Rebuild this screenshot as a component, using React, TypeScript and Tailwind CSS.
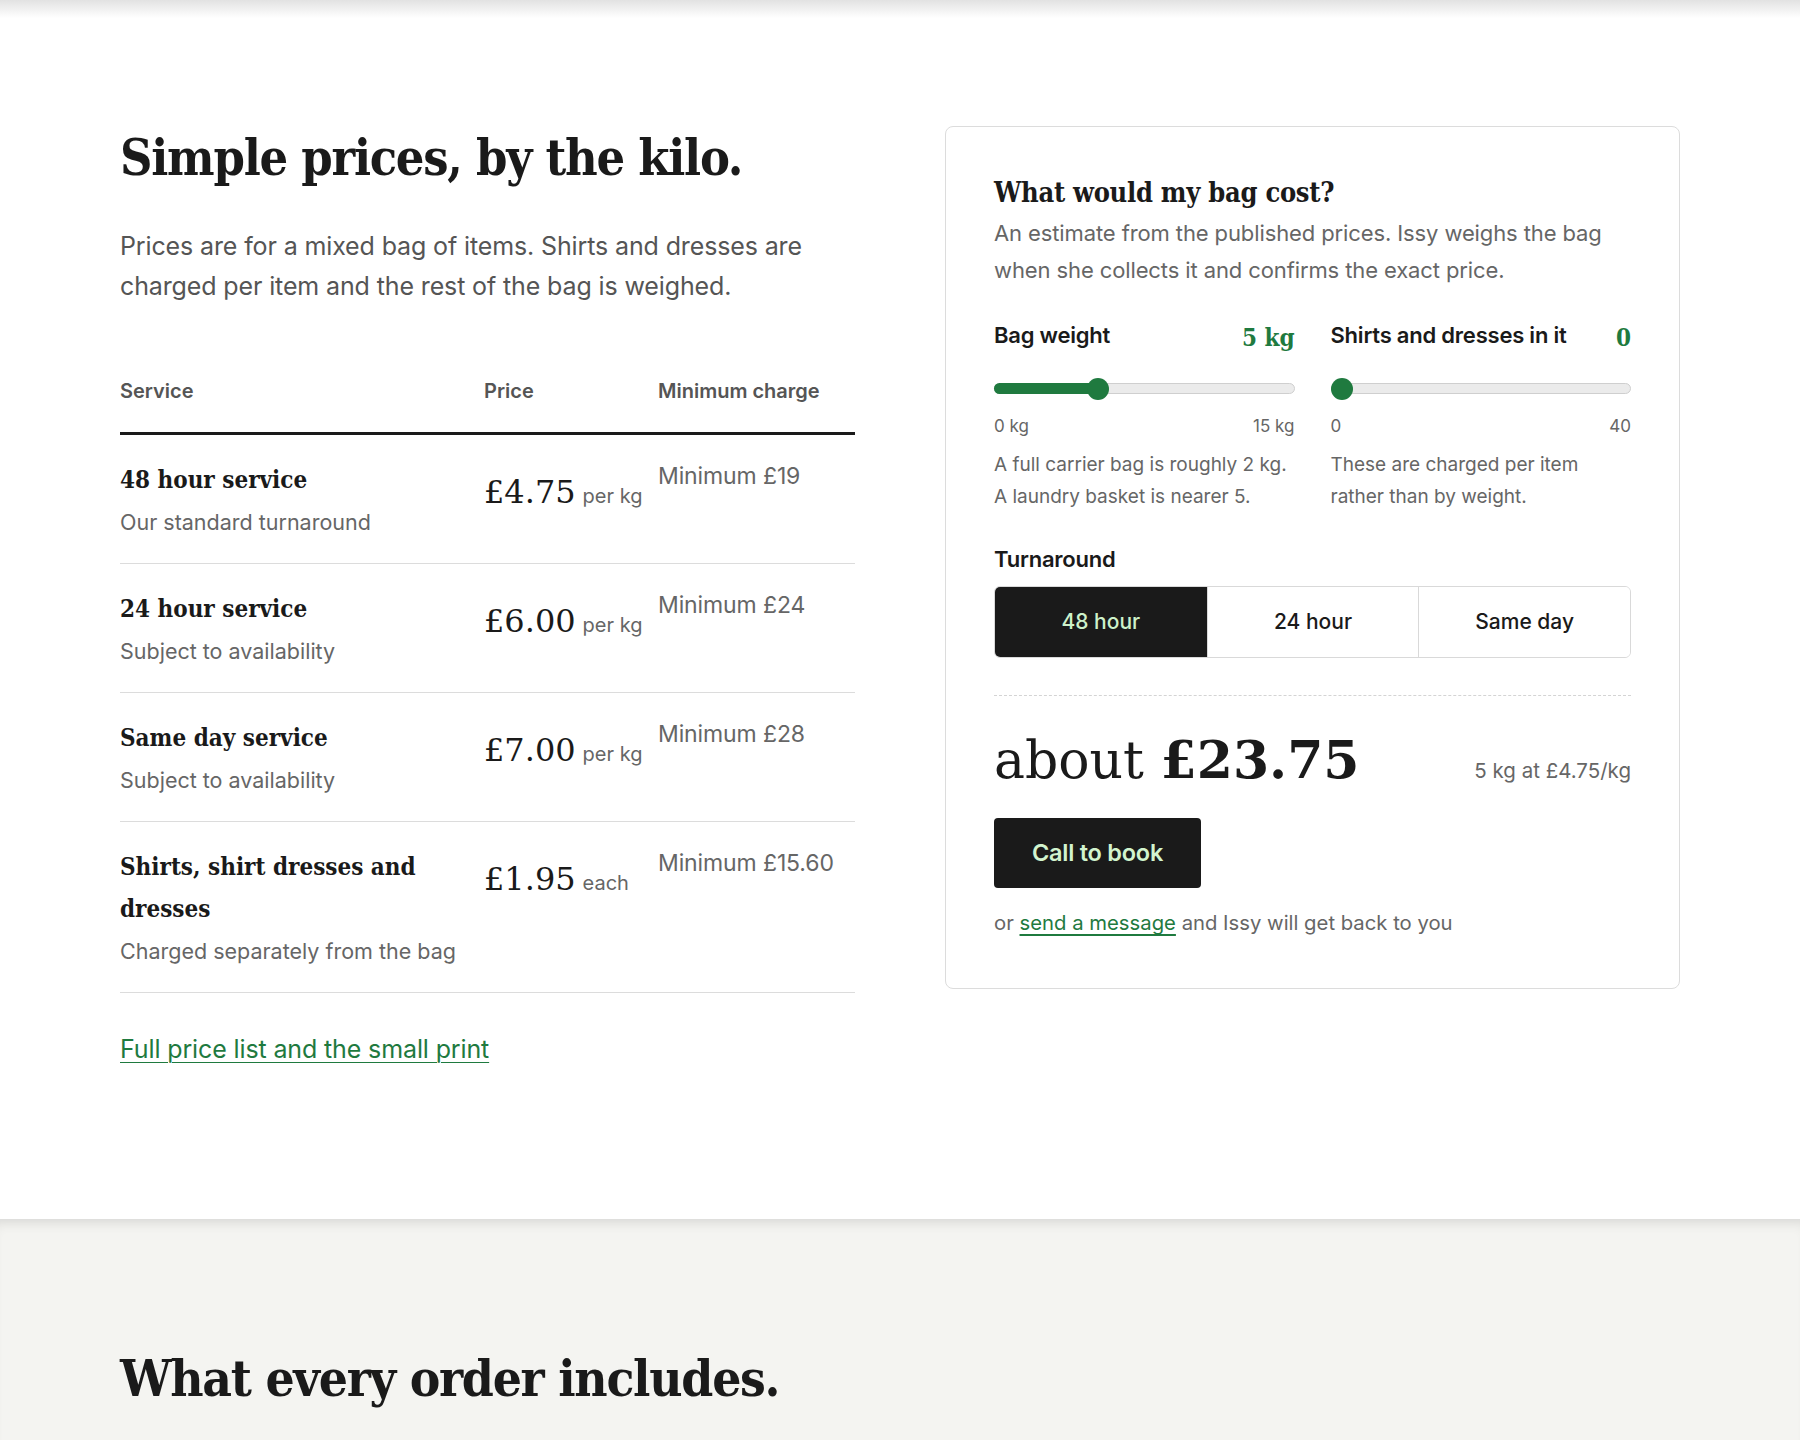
import React from "react";

const serif = "font-['DejaVu_Serif_Condensed','DejaVu_Serif',serif] [font-stretch:condensed]";
const serifN = "font-['DejaVu_Serif',serif]";

const rows = [
  { t: "48 hour service", s: "Our standard turnaround", p: "£4.75", u: "per kg", m: "Minimum £19" },
  { t: "24 hour service", s: "Subject to availability", p: "£6.00", u: "per kg", m: "Minimum £24" },
  { t: "Same day service", s: "Subject to availability", p: "£7.00", u: "per kg", m: "Minimum £28" },
  { t: "Shirts, shirt dresses and dresses", s: "Charged separately from the bag", p: "£1.95", u: "each", m: "Minimum £15.60" },
];

function Slider({ label, value, min, max, frac, hint }: { label: string; value: string; min: string; max: string; frac: "third" | "zero"; hint: React.ReactNode }) {
  return (
    <div>
      <div className="flex items-start justify-between">
        <div className="text-[22px] leading-[28px] font-semibold tracking-[-0.01em] text-[#1a1a1a]">{label}</div>
        <div className={serif + " mt-[3px] text-[24px] leading-[28px] font-bold text-[#1f7a3f]"}>{value}</div>
      </div>
      <div className="relative mt-[31px] h-[11px] rounded-full border border-[#cfcfcf] bg-[#ebebeb]">
        {frac === "third" ? (
          <>
            <div className="absolute left-[-1px] top-[-1px] h-[11px] w-[calc((100%-22px)/3+11px)] rounded-l-full bg-[#1f7a3f]" />
            <div className="absolute top-[-6.5px] left-[calc((100%-22px)/3)] h-[22px] w-[22px] rounded-full bg-[#1f7a3f]" />
          </>
        ) : (
          <div className="absolute top-[-6.5px] left-[-1px] h-[22px] w-[22px] rounded-full bg-[#1f7a3f]" />
        )}
      </div>
      <div className="mt-[20px] flex justify-between text-[17px] leading-[24px] text-[#666]">
        <span>{min}</span>
        <span>{max}</span>
      </div>
      <div className="mt-[11px] text-[19px] leading-[32px] text-[#666]">{hint}</div>
    </div>
  );
}

export default function App() {
  return (
    <div className="min-h-screen bg-white font-['Inter',sans-serif] text-[#1a1a1a]">
      <div className="h-[18px] bg-gradient-to-b from-[#e2e2e2] to-white" />
      <section className="pt-[108px] pb-[154px]">
        <div className="mx-auto grid w-[1560px] grid-cols-2 items-start gap-x-[90px]">
          <div>
            <h1 className={serif + " text-[50px] leading-[64px] font-bold tracking-[-0.025em]"}>Simple prices, by the kilo.</h1>
            <p className="mt-[36px] text-[25px] leading-[40px] tracking-[-0.005em] text-[#555]">
              Prices are for a mixed bag of items. Shirts and dresses are
              <br />
              charged per item and the rest of the bag is weighed.
            </p>
            <div className="mt-[71px]">
              <div className="grid grid-cols-[364px_174px_1fr] border-b-[3px] border-[#1a1a1a] pb-[27px] text-[20px] leading-[28px] font-semibold text-[#555]">
                <div>Service</div>
                <div>Price</div>
                <div>Minimum charge</div>
              </div>
              {rows.map((r) => (
                <div key={r.t} className="grid grid-cols-[364px_174px_1fr] border-b border-[#dcdcdc] pt-[24px] pb-[25px]">
                  <div className="pr-6">
                    <div className={serif + " text-[24px] leading-[42px] font-bold"}>{r.t}</div>
                    <div className="mt-[5px] text-[21.5px] leading-[32px] text-[#666]">{r.s}</div>
                  </div>
                  <div className="pt-[12px] leading-[42px] whitespace-nowrap">
                    <span className={serifN + " text-[32px] text-[#1a1a1a]"}>{r.p}</span>
                    <span className="ml-[7px] text-[20px] text-[#666]">{r.u}</span>
                  </div>
                  <div className="pt-[1px] text-[23px] leading-[32px] tracking-[-0.005em] text-[#666]">{r.m}</div>
                </div>
              ))}
            </div>
            <a href="#" className="mt-[40px] inline-block text-[25px] leading-[32px] tracking-[-0.005em] text-[#1f7a3f] underline underline-offset-[4px] decoration-1">
              Full price list and the small print
            </a>
          </div>

          <div className="rounded-[8px] border border-[#dcdcdc] px-12 pt-12 pb-[51px]">
            <h2 className={serif + " text-[27px] leading-[36px] font-bold tracking-[-0.01em]"}>What would my bag cost?</h2>
            <p className="mt-[4px] text-[22px] leading-[37px] tracking-[-0.005em] text-[#666]">
              An estimate from the published prices. Issy weighs the bag
              <br />
              when she collects it and confirms the exact price.
            </p>
            <div className="mt-[32px] grid grid-cols-2 gap-x-9">
              <Slider
                label="Bag weight"
                value="5 kg"
                min="0 kg"
                max="15 kg"
                frac="third"
                hint={<>A full carrier bag is roughly 2 kg.<br />A laundry basket is nearer 5.</>}
              />
              <Slider
                label="Shirts and dresses in it"
                value="0"
                min="0"
                max="40"
                frac="zero"
                hint={<>These are charged per item<br />rather than by weight.</>}
              />
            </div>
            <div className="mt-[32px] text-[22px] leading-[28px] font-semibold tracking-[-0.01em]">Turnaround</div>
            <div className="mt-[13px] grid h-[72px] grid-cols-3 overflow-hidden rounded-[6px] border border-[#d9d9d9] text-[21px] font-medium">
              <div className="flex items-center justify-center bg-[#1a1a1a] text-[#cdf2ca]">48 hour</div>
              <div className="flex items-center justify-center border-l border-[#d9d9d9] bg-white">24 hour</div>
              <div className="flex items-center justify-center border-l border-[#d9d9d9] bg-white">Same day</div>
            </div>
            <div className="mt-[37px] border-t border-dashed border-[#d4d4d4]" />
            <div className="mt-[34px] flex items-baseline justify-between">
              <div className={serifN + " text-[52px] leading-[60px]"}>
                about <span className="font-bold">£23.75</span>
              </div>
              <div className="text-[20.5px] text-[#666]">5 kg at £4.75/kg</div>
            </div>
            <button className="mt-[28px] flex h-[70px] w-[207px] items-center justify-center rounded-[4px] bg-[#1a1a1a] text-[23.5px] font-semibold tracking-[-0.01em] text-[#d2f4ce]">
              Call to book
            </button>
            <div className="mt-[21px] text-[20.3px] leading-[28px] text-[#666]">
              or{" "}
              <a href="#" className="text-[#1f7a3f] underline underline-offset-[4px]">send a message</a>{" "}
              and Issy will get back to you
            </div>
          </div>
        </div>
      </section>
      <section className="bg-[#f4f4f1] pt-[127px] pb-[120px] shadow-[inset_0_12px_14px_-10px_rgba(0,0,0,0.14)]">
        <div className="mx-auto w-[1560px]">
          <h2 className={serif + " text-[51px] leading-[64px] font-bold tracking-[-0.025em]"}>What every order includes.</h2>
        </div>
      </section>
    </div>
  );
}
